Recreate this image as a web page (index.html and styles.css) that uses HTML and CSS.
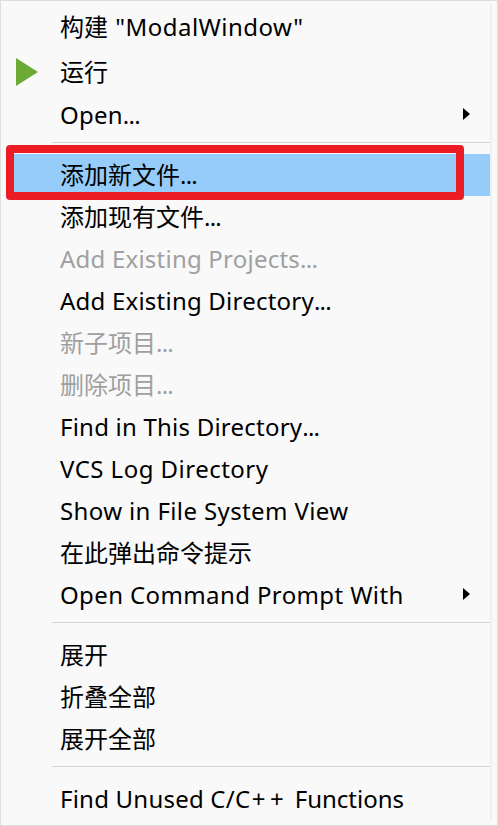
FILE: index.html
```html
<!DOCTYPE html>
<html lang="zh-CN">
<head>
<meta charset="utf-8">
<title>Menu</title>
<link rel="stylesheet" href="styles.css">
</head>
<body>
<ul class="menu">
  <li class="item first"><span class="label">构建 <span class="wide quoted">"ModalWindow"</span></span></li>
  <li class="item tall"><svg class="run" viewBox="0 0 22 28"><path d="M0 0L22 14L0 28Z"/></svg><span class="label">运行</span></li>
  <li class="item"><span class="label"><span class="latin">Open</span><span class="dots">...</span></span><svg class="arrow" viewBox="0 0 7 12"><path d="M0 0L7 6L0 12Z"/></svg></li>
  <li class="separator"></li>
  <li class="item selected"><span class="label">添加新文件<span class="dots">...</span></span><span class="marker"></span></li>
  <li class="item"><span class="label">添加现有文件<span class="dots">...</span></span></li>
  <li class="item disabled"><span class="label"><span class="latin">Add Existing Projects</span><span class="dots">...</span></span></li>
  <li class="item"><span class="label"><span class="latin">Add Existing Directory</span><span class="dots">...</span></span></li>
  <li class="item disabled"><span class="label">新子项目<span class="dots">...</span></span></li>
  <li class="item disabled"><span class="label">删除项目<span class="dots">...</span></span></li>
  <li class="item"><span class="label"><span class="latin">Find in This Directory</span><span class="dots">...</span></span></li>
  <li class="item"><span class="label wide">VCS Log Directory</span></li>
  <li class="item"><span class="label medium">Show in File System View</span></li>
  <li class="item"><span class="label">在此弹出命令提示</span></li>
  <li class="item"><span class="label medium">Open Command Prompt With</span><svg class="arrow" viewBox="0 0 7 12"><path d="M0 0L7 6L0 12Z"/></svg></li>
  <li class="separator"></li>
  <li class="item"><span class="label">展开</span></li>
  <li class="item"><span class="label">折叠全部</span></li>
  <li class="item"><span class="label">展开全部</span></li>
  <li class="separator"></li>
  <li class="item"><span class="label"><span class="latin">Find Unused C/C</span><span class="plus">++</span><span> Functions</span></span></li>
</ul>
</body>
</html>
```
FILE: styles.css
```css
* { box-sizing: border-box; }
body { margin: 0; background: #f9f9f9; overflow: hidden; }
.menu { position: relative; margin: 0; padding: 5px 7px 0 6px; height: 826px; list-style: none; border: 1px solid #dedede; font: 24px/42px "Noto Sans", "Noto Sans CJK SC", sans-serif; color: #000; }
.menu::after { content: ""; position: absolute; right: 5px; top: 3px; bottom: 5px; width: 2px; background: #f0f0f0; }
.item { position: relative; display: flex; align-items: center; height: 42px; padding-left: 53px; white-space: nowrap; }
.first { height: 44px; padding-bottom: 2px; }
.tall { height: 44px; padding-bottom: 1px; }
.separator { height: 1px; margin: 6px 0 11px 45px; background: #d3d3d3; }
.disabled { color: #a0a0a0; }
.selected { background: #96ccfa; }
.latin { letter-spacing: .22px; }
.medium { letter-spacing: .38px; }
.wide { letter-spacing: .47px; }
.quoted { margin-left: 1px; }
.dots { letter-spacing: -.75px; }
.plus { margin-left: 1.5px; letter-spacing: 4.6px; }
.run { position: absolute; left: 9px; top: 8px; width: 22px; height: 28px; fill: #6aaa35; }
.arrow { width: 7px; height: 12px; margin-left: auto; margin-right: 20px; margin-top: -2px; }
.marker { position: absolute; left: -1px; top: -9px; width: 458px; height: 55px; border: 8px solid #ec1c24; border-radius: 4px; }
```
